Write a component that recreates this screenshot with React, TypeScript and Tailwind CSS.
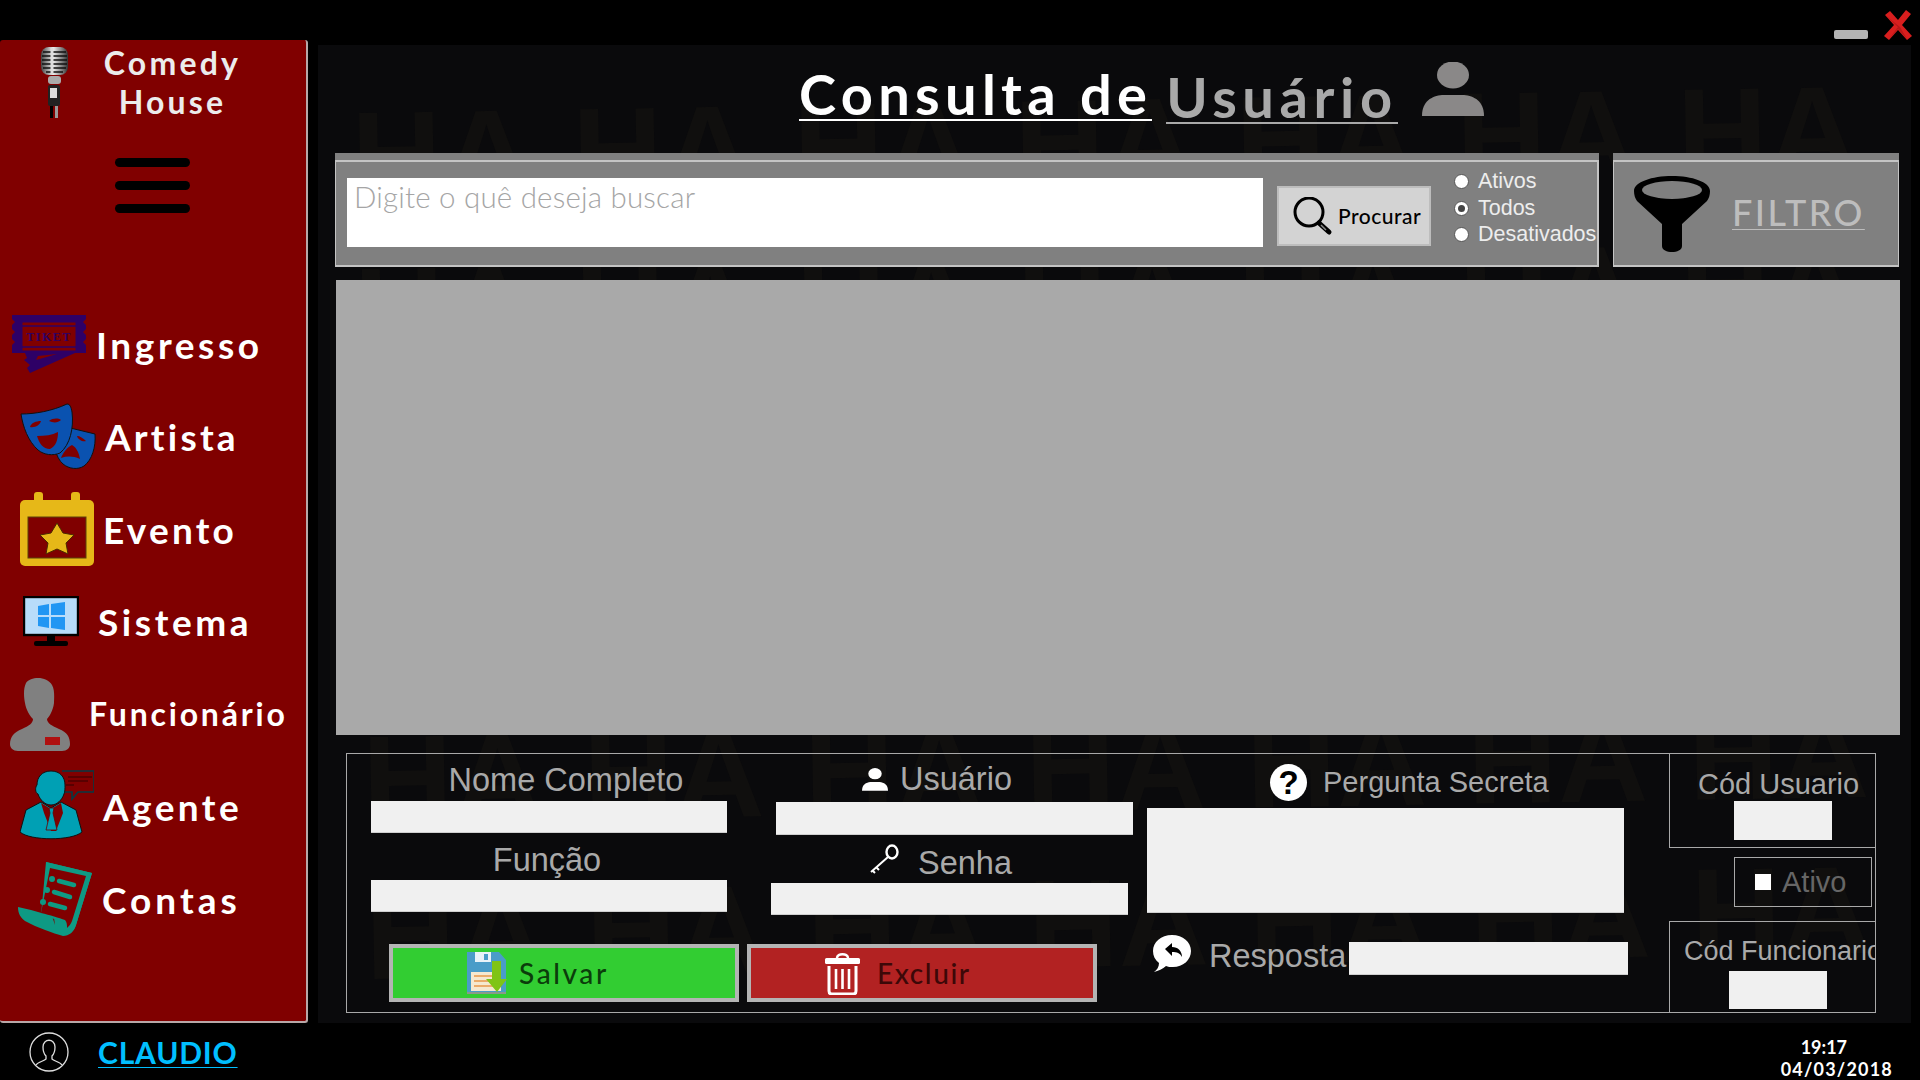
import React from "react";

const fontHead = "font-['Lato','Open_Sans',sans-serif]";
const fontBody = "font-['Liberation_Sans',Arial,sans-serif]";

function Mic() {
  return (
    <svg width="29" height="72" viewBox="0 0 29 72">
      <defs>
        <linearGradient id="micg" x1="0" x2="1">
          <stop offset="0" stopColor="#444" />
          <stop offset="0.45" stopColor="#eee" />
          <stop offset="1" stopColor="#333" />
        </linearGradient>
      </defs>
      <rect x="1" y="1" width="27" height="28" rx="8" fill="url(#micg)" />
      <path d="M3 6h23M2 10h25M2 14h25M2 18h25M3 22h23M6 26h17" stroke="#111" strokeWidth="1.5" />
      <path d="M12 2v26" stroke="#ddd" strokeWidth="3" />
      <rect x="8" y="30" width="13" height="8" rx="3" fill="#aaa" />
      <rect x="8" y="39" width="12" height="21" rx="2" fill="#222" />
      <rect x="10" y="42" width="7" height="10" fill="#ddd" />
      <rect x="10" y="60" width="3" height="12" fill="#000" />
      <rect x="15" y="60" width="3" height="12" fill="#999" />
    </svg>
  );
}

function Ticket() {
  return (
    <svg width="76" height="58" viewBox="0 0 76 58">
      <path
        d="M1 0h74v4l-3 3 3 3v4l-3 3 3 3v4l-3 3 3 3v8H64L19 58l-3-5 3-3-6-5 3-2-2-5H1v-8l3-3-3-3v-4l3-3-3-3v-4l3-3-3-3z"
        fill="#2e0066"
      />
      <path d="M11 7h54v29H11z" fill="#800000" stroke="#2e0066" strokeWidth="1" />
      <path d="M11 11h54M11 32h54" stroke="#2e0066" strokeWidth="1.5" />
      <text x="38" y="26" textAnchor="middle" fontFamily="Liberation Serif" fontSize="12" fontWeight="700" fill="#2e0066" letterSpacing="1.5">
        TIKET
      </text>
      <path d="M25 45l21-6-19 2z" fill="#800000" />
    </svg>
  );
}

function Masks() {
  return (
    <svg width="76" height="66" viewBox="0 0 76 66">
      <path
        d="M34 21l41 10c1 13-3 26-11 32-6 4-15 3-21-2-7-6-12-22-9-40z"
        fill="#0a52b0"
        stroke="#111"
        strokeWidth="1"
      />
      <path d="M1 11c14 0 31-3 46-10 3 0 4 3 5 8 2 16-2 33-12 41-7 3-16 2-22-3C8 38 3 24 1 11z" fill="#0a52b0" stroke="#111" strokeWidth="1" />
      <path d="M17 33c8 0 15-1 21-4 0 8-2 14-8 17-7 0-11-6-13-13z" fill="#800000" />
      <path d="M10 24c1-4 6-6 11-6-1 4-6 7-11 6zM29 18c4-3 9-3 12-1-3 3-8 3-12 1z" fill="#800000" />
      <path d="M41 55c2-5 6-11 11-13 5 3 7 8 8 14-7-3-13-3-19-1zM57 33c3 0 6 2 9 5-3 1-8-1-9-5z" fill="#800000" />
    </svg>
  );
}

function Calendar() {
  return (
    <svg width="74" height="74" viewBox="0 0 74 74">
      <rect x="14" y="0" width="9" height="12" rx="3" fill="#e6b818" />
      <rect x="51" y="0" width="9" height="12" rx="3" fill="#e6b818" />
      <rect x="0" y="8" width="74" height="66" rx="5" fill="#e6b818" />
      <rect x="8" y="25" width="58" height="41" fill="#800000" stroke="#5a4208" strokeWidth="1" />
      <path
        d="M37 31l6 10 11 2-8 8 2 11-11-5-11 5 2-11-8-8 11-2z"
        fill="#e6b818"
        stroke="#4a2a00"
        strokeWidth="1"
        strokeLinejoin="round"
      />
    </svg>
  );
}

function Monitor() {
  return (
    <svg width="56" height="50" viewBox="0 0 56 50">
      <rect x="1" y="1" width="54" height="38" fill="#b8dcfa" stroke="#000" strokeWidth="2.4" />
      <path d="M15 10l11-2v11H15zM28 8l14-2v13H28zM15 21h11v11l-11-2zM28 21h14v13l-14-2z" fill="#2196f3" />
      <rect x="24" y="40" width="8" height="6" fill="#000" />
      <rect x="11" y="45" width="34" height="5" rx="2" fill="#000" />
    </svg>
  );
}

function Employee() {
  return (
    <svg width="60" height="74" viewBox="0 0 60 74">
      <path
        d="M16 6c5-7 21-7 26 2 3 5 2 14 2 18-1 8-5 14-7 16 0 4 5 7 12 10 8 3 11 8 11 15 0 4-3 7-8 7H8c-5 0-8-3-8-7 0-7 4-12 12-15 7-3 11-6 11-10-3-3-7-9-8-16-1-5-2-14 1-20z"
        fill="#808080"
      />
      <rect x="35" y="60" width="15" height="8" fill="#b01010" />
    </svg>
  );
}

function Agent() {
  return (
    <svg width="74" height="72" viewBox="0 0 74 72">
      <path d="M42 1h32v21H58l-6 7v-7h-8" fill="#800000" stroke="#063a44" strokeWidth="1.6" />
      <path d="M48 7h24M48 11h20M46 15h8" stroke="#300" strokeWidth="1.2" />
      <path
        d="M31 1c9 0 14 6 14 14 0 3 0 7-1 9-2 6-7 11-13 11s-11-5-13-11c-3-1-3-7-1-9 0-8 5-14 14-14z"
        fill="#00a0b4"
        stroke="#111"
        strokeWidth="1"
      />
      <path d="M21 32L6 40 0 62c10 9 52 9 62 0l-6-22-15-8-10 6z" fill="#00a0b4" stroke="#111" strokeWidth="1" />
      <path d="M21 33l10 6 10-6 2 10-7 18-5 0-7-18z" fill="#800000" />
      <path d="M29 38h5l-1 5 4 17h-11l4-17z" fill="#00a0b4" stroke="#600" strokeWidth="0.8" />
    </svg>
  );
}

function Bill() {
  return (
    <svg width="74" height="75" viewBox="0 0 74 75">
      <path d="M28 1l46 11-16 52c-2 7-7 11-13 11-10-3-25-8-38-15C3 57 0 53 0 46l13 3 21 6c1 3 2 6 3 9z" fill="#0e9a84" />
      <path d="M28 1l46 11-16 52c-2 6-6 9-11 10 3-3 5-7 5-11-6-2-18-6-29-9L28 1z" fill="#0e9a84" />
      <path d="M32 7l36 8-14 45c-1 3-3 5-5 7 0-3 0-6-2-8-6-2-15-5-24-7z" fill="#800000" />
      <circle cx="34" cy="18" r="3" fill="#0e9a84" />
      <circle cx="29" cy="29" r="3" fill="#0e9a84" />
      <circle cx="25" cy="41" r="3" fill="#0e9a84" />
      <path d="M41 20l15 4M36 31l16 5M32 43l15 4" stroke="#0e9a84" strokeWidth="4.5" strokeLinecap="round" />
    </svg>
  );
}

function Person({ className }: { className?: string }) {
  return (
    <svg className={className} viewBox="0 0 62 54" fill="currentColor">
      <ellipse cx="31" cy="13" rx="16" ry="13.5" />
      <path d="M0 54c0-15 10-20 20-21h22c10 1 20 6 20 21z" />
    </svg>
  );
}

function Funnel() {
  return (
    <svg width="76" height="76" viewBox="0 0 76 76">
      <path d="M0 15C0 6 18 0 38 0s38 6 38 15c0 4-1 7-3 10L48 48v22c0 8-20 8-20 0V48L3 25c-2-3-3-6-3-10z" fill="#000" />
      <ellipse cx="38" cy="14" rx="30" ry="9" fill="#808080" />
    </svg>
  );
}

function Magnifier() {
  return (
    <svg width="40" height="39" viewBox="0 0 40 39" fill="none">
      <circle cx="16" cy="15" r="14" stroke="#000" strokeWidth="3" />
      <path d="M26 26l10 9" stroke="#000" strokeWidth="5" strokeLinecap="round" />
      <path d="M28 28l5 5" stroke="#888" strokeWidth="1.5" />
    </svg>
  );
}

function Floppy() {
  return (
    <svg width="40" height="42" viewBox="0 0 40 42">
      <path d="M0 0h32l7 8v33H0z" fill="#4a9cc8" />
      <rect x="8" y="0" width="16" height="10" fill="#e8f2f8" />
      <rect x="17" y="2" width="4" height="6" fill="#4a9cc8" />
      <rect x="4" y="20" width="30" height="19" fill="#f5e8d0" />
      <path d="M7 24h22M7 29h22M7 34h22" stroke="#e8964a" strokeWidth="1.4" />
      <path d="M25 9h9v18h6L30 40 19 27h6z" fill="#7fc415" />
      <rect x="0" y="40" width="39" height="2" fill="#8a9a8a" />
    </svg>
  );
}

function Trash() {
  return (
    <svg width="37" height="43" viewBox="0 0 37 43" fill="none" stroke="#fff">
      <path d="M13 6c0-5 11-5 11 0" strokeWidth="2.5" />
      <rect x="1" y="6" width="35" height="6" rx="1.5" fill="#fff" stroke="none" />
      <path d="M5 14v25c0 2 1 3 3 3h21c2 0 3-1 3-3V14" strokeWidth="3" />
      <path d="M12 17v20M18.5 17v20M25 17v20" strokeWidth="2.6" />
    </svg>
  );
}

function KeyIcon() {
  return (
    <svg width="31" height="30" viewBox="0 0 31 30" fill="none" stroke="#fff">
      <ellipse cx="23" cy="8" rx="5.5" ry="6.5" strokeWidth="2.4" />
      <path d="M19 13L2 28M7 23l3 3M3 26l3 3" strokeWidth="2" />
    </svg>
  );
}

function UserCircle() {
  return (
    <svg width="40" height="40" viewBox="0 0 40 40" fill="none" stroke="#ddd" strokeWidth="1.3">
      <circle cx="20" cy="20" r="19" />
      <path d="M14 15c0-9 12-9 12 0 0 4-1 7-3 9v3c2 2 8 3 10 6M14 15c0 4 1 7 3 9v3c-2 2-8 3-10 6" />
    </svg>
  );
}

function Reply() {
  return (
    <svg width="38" height="37" viewBox="0 0 38 37">
      <path d="M19 0c11 0 19 7 19 16s-8 16-18 16c-3 0-5 0-7-1-3 3-8 5-12 6 3-2 5-5 5-9C2 25 0 21 0 16 0 7 8 0 19 0z" fill="#fff" />
      <path d="M12 14l7-6v4c6 0 10 4 10 10-2-4-5-5-10-5v4z" fill="#000" />
    </svg>
  );
}

function QuestionIcon() {
  return (
    <div className={`w-[37px] h-[37px] rounded-full bg-white flex items-center justify-center text-black text-[33px] font-bold leading-none ${fontBody}`}>
      ?
    </div>
  );
}

function CloseX() {
  return (
    <svg width="30" height="30" viewBox="0 0 30 30">
      <path d="M2 5l5-4 8 9 8-10 5 4-9 11 10 11-5 4-9-10-9 10-5-4 10-11z" fill="#d81e1e" />
      <path d="M2 5l13 12-9 12 9-10 9 10-7-12z" fill="#a01414" opacity="0.6" />
    </svg>
  );
}

const navItems = [
  { label: "Ingresso", pad: "pl-[11px]", gap: "ml-[9px]", text: "text-[37px] tracking-[3.6px]", icon: <Ticket /> },
  { label: "Artista", pad: "pl-[20px]", gap: "ml-[9px]", text: "text-[37px] tracking-[3.2px]", icon: <Masks /> },
  { label: "Evento", pad: "pl-[20px]", gap: "ml-[9px]", text: "text-[37px] tracking-[3.2px]", icon: <Calendar /> },
  { label: "Sistema", pad: "pl-[23px]", gap: "ml-[19px]", text: "text-[37px] tracking-[3.6px]", icon: <Monitor /> },
  { label: "Funcionário", pad: "pl-[10px]", gap: "ml-[19px]", text: "text-[32px] tracking-[2.8px]", icon: <Employee /> },
  { label: "Agente", pad: "pl-[20px]", gap: "ml-[9px]", text: "text-[37px] tracking-[3.4px]", icon: <Agent /> },
  { label: "Contas", pad: "pl-[18px]", gap: "ml-[10px]", text: "text-[37px] tracking-[4px]", icon: <Bill /> },
];

function Sidebar() {
  return (
    <aside className="w-[308px] h-[983px] bg-[#800000] border-r-2 border-b-2 border-[#b8a8a8] rounded-[3px] shrink-0">
      <div className="flex h-[86px]">
        <div className="pl-[40px] pt-[6px]">
          <Mic />
        </div>
        <div className={`ml-[18px] w-[171px] text-center text-[#ececec] text-[32px] font-bold leading-[39px] pt-[3px] tracking-[3.2px] ${fontHead}`}>
          Comedy
          <br />
          House
        </div>
      </div>
      <div className="ml-[115px] mt-[32px] w-[75px] flex flex-col gap-[14px]">
        <div className="h-[9px] bg-black rounded-full" />
        <div className="h-[9px] bg-black rounded-full" />
        <div className="h-[9px] bg-black rounded-full" />
      </div>
      <div className="mt-[85px]">
        {navItems.map((n) => (
          <div key={n.label} className={`h-[92.5px] flex items-center ${n.pad}`}>
            <div className="shrink-0 flex -mt-[1px]">{n.icon}</div>
            <span className={`${n.gap} ${n.text} text-white font-bold whitespace-nowrap ${fontHead}`}>{n.label}</span>
          </div>
        ))}
      </div>
    </aside>
  );
}

const haCells = Array.from({ length: 42 }, (_, i) => i);

function Pattern() {
  return (
    <div aria-hidden="true" className="absolute inset-0 overflow-hidden pointer-events-none p-[20px]">
      <div className={`flex flex-wrap -rotate-1 text-[#100f0e] text-[125px] font-bold leading-[156px] ${fontBody}`}>
        {haCells.map((i) => (
          <span key={i} className="w-[221px] text-center">
            HA
          </span>
        ))}
      </div>
    </div>
  );
}

function Radio({ label, checked, h }: { label: string; checked?: boolean; h: string }) {
  return (
    <div className={`flex items-center ${h}`}>
      <div className="w-[15px] h-[15px] rounded-full bg-white border border-[#555] flex items-center justify-center shrink-0">
        {checked && <div className="w-[7px] h-[7px] rounded-full bg-[#444]" />}
      </div>
      <span className={`ml-[9px] text-[21.5px] leading-none text-[#ededed] whitespace-nowrap ${fontBody}`}>{label}</span>
    </div>
  );
}

function SearchBar() {
  return (
    <div className="flex relative">
      <div className="w-[1264px] h-[114px] bg-[#808080] pt-[7px]">
        <div className="h-[107px] border-t-2 border-b-2 border-r-2 border-l border-[#c4c4c4] pl-[11px] pt-[16px] flex">
          <div className={`w-[916px] h-[69px] bg-white pl-[7px] text-[29.5px] leading-[38px] font-light tracking-[0.2px] text-[#a5a5a5] ${fontHead}`}>
            Digite o quê deseja buscar
          </div>
          <div className="ml-[14px] mt-[8px] w-[154px] h-[60px] bg-[#d3d3d3] border-2 border-[#bdbdbd] flex items-center pl-[14px]">
            <Magnifier />
            <span className={`ml-[5px] text-[21px] tracking-[0.5px] text-black font-medium ${fontHead}`}>Procurar</span>
          </div>
          <div className="ml-[23px] -mt-[10px] flex flex-col">
            <Radio label="Ativos" h="h-[27px]" />
            <Radio label="Todos" checked h="h-[27px]" />
            <Radio label="Desativados" h="h-[25px]" />
          </div>
        </div>
      </div>
      <div className="ml-[14px] w-[286px] h-[114px] bg-[#808080] pt-[7px]">
        <div className="h-[107px] border-t-2 border-b-2 border-r border-l border-[#c4c4c4] pl-[20px] flex items-center">
          <Funnel />
          <span className={`ml-[22px] -mt-[4px] text-[36px] leading-[40px] tracking-[2.4px] font-medium text-[#bdbdbd] underline underline-offset-[3px] decoration-1 ${fontHead}`}>
            FILTRO
          </span>
        </div>
      </div>
    </div>
  );
}

const labelCls = `text-[32.5px] leading-none text-[#a9a9a9] whitespace-nowrap ${fontBody}`;
const smallLabelCls = `text-[29px] leading-none text-[#a9a9a9] whitespace-nowrap ${fontBody}`;
const field = "bg-[#f0f0f0] border-b border-[#cfcfcf]";

function Form() {
  return (
    <div className="relative ml-[28px] mt-[18px] w-[1530px] h-[260px] border border-[#a9a9a9] flex">
      <div className="w-[786px] shrink-0">
        <div className="flex h-[161px]">
          <div className="ml-[24px] w-[356px] shrink-0">
            <div className={`h-[47px] flex items-center justify-center pl-[34px] pt-[5px] ${labelCls}`}>Nome Completo</div>
            <div className={`h-[32px] ${field}`} />
            <div className={`h-[47px] flex items-center justify-center pt-[7px] pr-[4px] ${labelCls}`}>Função</div>
            <div className={`h-[32px] ${field}`} />
          </div>
          <div className="ml-[44px] w-[362px] shrink-0">
            <div className="h-[48px] flex items-center pl-[91px] pt-[2px]">
              <Person className="w-[26px] h-[25px] text-white" />
              <span className={`ml-[12px] ${labelCls}`}>Usuário</span>
            </div>
            <div className={`ml-[5px] h-[33px] ${field}`} />
            <div className="h-[48px] flex items-center pl-[98px]">
              <KeyIcon />
              <span className={`ml-[18px] mt-[8px] ${labelCls}`}>Senha</span>
            </div>
            <div className={`w-[357px] h-[32px] ${field}`} />
          </div>
        </div>
        <div className="ml-[42px] mt-[29px] flex gap-[8px]">
          <div className="w-[350px] h-[58px] bg-[#32cd32] border-[4px] border-[#b4b4b4] flex items-center pl-[74px]">
            <Floppy />
            <span className={`ml-[12px] text-[28px] tracking-[2.6px] font-medium text-[#0b3d0b] ${fontHead}`}>Salvar</span>
          </div>
          <div className="w-[350px] h-[58px] bg-[#b22222] border-[4px] border-[#b4b4b4] flex items-center pl-[73px]">
            <Trash />
            <span className={`ml-[16px] text-[28px] tracking-[1.6px] font-medium text-[#3d0808] ${fontHead}`}>Excluir</span>
          </div>
        </div>
      </div>

      <div className="ml-[14px] w-[481px] shrink-0">
        <div className="h-[54px] flex items-center pl-[123px] pt-[2px]">
          <QuestionIcon />
          <span className={`ml-[16px] ${smallLabelCls}`}>Pergunta Secreta</span>
        </div>
        <div className={`w-[477px] h-[105px] ${field}`} />
        <div className="mt-[21px] h-[48px] flex items-center pl-[6px]">
          <div className="mb-[10px]">
            <Reply />
          </div>
          <span className={`ml-[18px] mb-[3px] ${labelCls}`}>Resposta</span>
          <div className={`ml-[3px] w-[279px] h-[33px] ${field}`} />
        </div>
      </div>

      <div className="ml-[41px] flex-1 flex flex-col min-w-0">
        <div className="h-[94px] border-l border-b border-[#a9a9a9]">
          <div className={`h-[47px] flex items-center pl-[28px] pt-[13px] ${smallLabelCls}`}>Cód Usuario</div>
          <div className="ml-[64px] w-[98px] h-[39px] bg-[#f0f0f0]" />
        </div>
        <div className="ml-[65px] mt-[9px] w-[138px] h-[50px] border border-[#a9a9a9] flex items-center pl-[20px]">
          <div className="w-[16px] h-[16px] bg-white" />
          <span className={`ml-[11px] text-[29px] leading-none text-[#666] ${fontBody}`}>Ativo</span>
        </div>
        <div className="mt-[14px] flex-1 border-l border-t border-[#a9a9a9] overflow-hidden">
          <div className={`h-[49px] flex items-center pl-[14px] pt-[9px] text-[27px] leading-none text-[#a9a9a9] whitespace-nowrap ${fontBody}`}>Cód Funcionario</div>
          <div className="ml-[59px] w-[98px] h-[38px] bg-[#f0f0f0]" />
        </div>
      </div>
    </div>
  );
}

export default function App() {
  return (
    <div className="relative w-[1920px] h-[1080px] bg-black overflow-hidden">
      <div className="h-[40px] flex justify-end items-start pr-[7px] pt-[10px]">
        <div className="w-[34px] h-[9px] mt-[20px] mr-[15px] rounded-[2px] bg-[#b4b4b4]" />
        <CloseX />
      </div>
      <div className="flex items-start">
        <Sidebar />
        <main className="relative ml-[10px] mt-[5px] w-[1593px] h-[978px] bg-[#0a0a0c] overflow-hidden">
          <Pattern />
          <div className="relative">
            <div className="h-[108px] flex items-start pl-[481px] pt-[24px]">
              <span className={`text-[56px] leading-[50px] tracking-[5.3px] font-bold text-white border-b-2 border-white whitespace-nowrap ${fontHead}`}>
                Consulta de
              </span>
              <span className={`ml-[14px] mt-[3px] text-[56px] leading-[50px] tracking-[5.6px] font-bold text-[#a9a9a9] border-b-2 border-[#a9a9a9] whitespace-nowrap ${fontHead}`}>
                Usuário
              </span>
              <Person className="ml-[24px] -mt-[7px] w-[62px] h-[54px] text-[#8a8888]" />
            </div>
            <div className="pl-[17px]">
              <SearchBar />
            </div>
            <div className="ml-[18px] mt-[13px] w-[1564px] h-[455px] bg-[#a9a9a9]" />
            <Form />
          </div>
        </main>
      </div>
      <footer className="absolute left-0 right-0 bottom-0 h-[57px] flex items-center pl-[29px]">
        <UserCircle />
        <span className={`ml-[29px] text-[30px] leading-[30px] tracking-[0.8px] font-bold text-[#00bfff] underline underline-offset-[3px] decoration-1 ${fontHead}`}>
          CLAUDIO
        </span>
        <div className={`ml-auto mr-[27px] mt-[12px] text-center text-white text-[18px] leading-[22px] font-bold tracking-[1.2px] ${fontHead}`}>
          <div className="pr-[26px] tracking-[0px]">19:17</div>
          <div>04/03/2018</div>
        </div>
      </footer>
    </div>
  );
}
